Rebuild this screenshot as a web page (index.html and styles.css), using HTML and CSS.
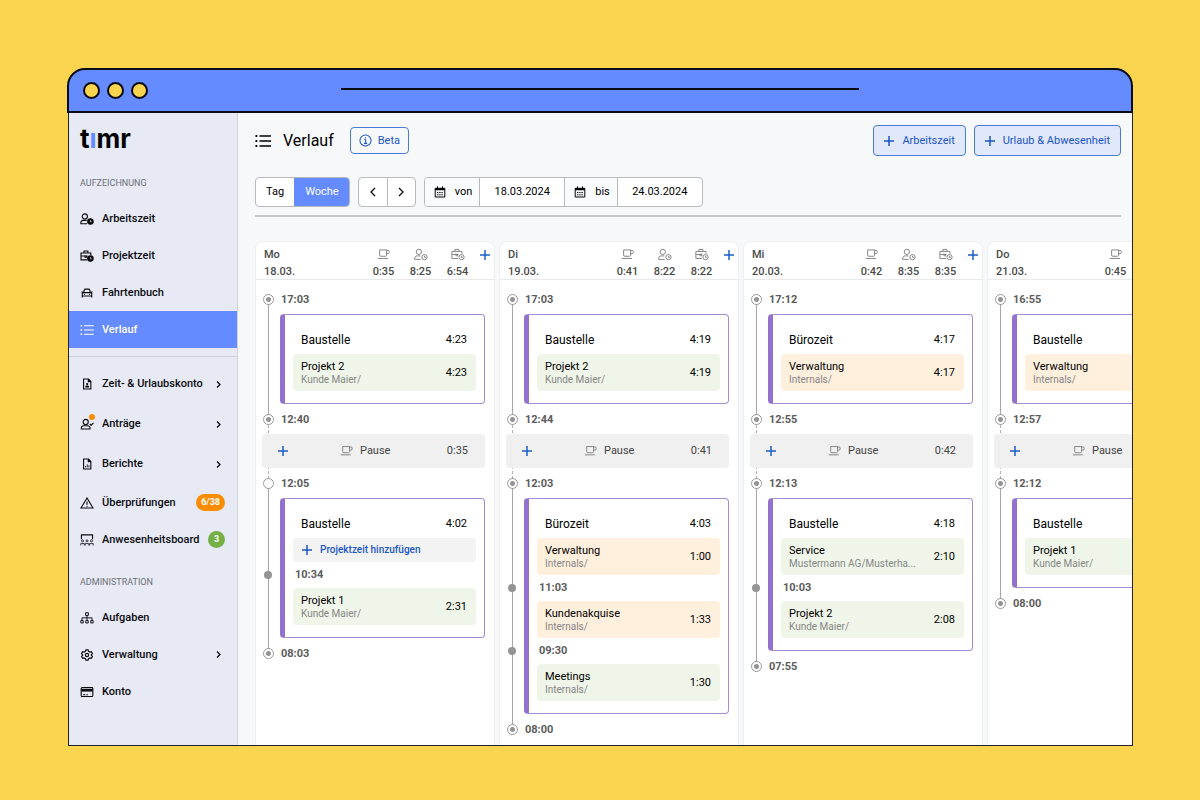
FILE: index.html
```html
<!DOCTYPE html>
<html lang="de">
<head>
    <meta charset="UTF-8">
    <meta name="viewport" content="width=device-width, initial-scale=1.0">
    <title>timr - Verlauf</title>
    <link rel="stylesheet" href="styles.css">
</head>
<body>

    <!-- Icon definitions -->
    <svg class="icon-defs" aria-hidden="true">
        <symbol id="i-list" viewBox="0 0 16 14">
            <path d="M4.5 2H16M4.5 7H16M4.5 12H16"/>
            <path d="M0.5 2H2.3M0.5 7H2.3M0.5 12H2.3" stroke-width="1.8"/>
        </symbol>
        <symbol id="i-user-time" viewBox="0 0 16 14">
            <circle cx="5.5" cy="4" r="3"/>
            <path d="M7.6 12.6H0.8C0.6 9.8 1.8 8.6 3.6 8.6H7.2"/>
            <circle cx="12" cy="10" r="3"/>
            <path d="M12 8.4V10.2H13.6"/>
        </symbol>
        <symbol id="i-user-time-solid" viewBox="0 0 16 14">
            <circle cx="5.5" cy="4" r="3"/>
            <path d="M8 12.6H0.8C0.6 9.8 1.8 8.6 3.6 8.6H7.6"/>
            <circle cx="12" cy="10" r="3.2" fill="currentColor"/>
            <path d="M12 8.4V10.2H13.4" stroke="#e7eaf4" stroke-width="0.9"/>
        </symbol>
        <symbol id="i-case-time" viewBox="0 0 16 14">
            <path d="M8 11.5H1V3.5H12.5V6M4.5 3.5V1.2H9V3.5M1 7H8M5.7 6V8.5H7.8V6"/>
            <circle cx="12" cy="10" r="3"/>
            <path d="M12 8.4V10.2H13.6"/>
        </symbol>
        <symbol id="i-case-time-solid" viewBox="0 0 16 14">
            <path d="M8 11.5H1V3.5H12.5V6M4.5 3.5V1.2H9V3.5M1 7H8M5.7 6V8.5H7.8V6"/>
            <circle cx="12" cy="10" r="3.2" fill="currentColor"/>
            <path d="M12 8.4V10.2H13.4" stroke="#e7eaf4" stroke-width="0.9"/>
        </symbol>
        <symbol id="i-car" viewBox="0 0 16 14">
            <path d="M2.5 12.3V7.5L4 6.6L5 3.2Q5.2 2.5 6 2.5H10Q10.8 2.5 11 3.2L12 6.6L13.5 7.5V12.3M2.5 10.5H13.5M4 6.6H12M1.6 5.6L3.6 6.4M14.4 5.6L12.4 6.4M4.6 8.6H5.6M10.4 8.6H11.4"/>
        </symbol>
        <symbol id="i-file-user" viewBox="0 0 16 14">
            <path d="M4 1.2H9.8L12.5 4V12.8H4ZM9.5 1.4V4.2H12.3"/>
            <path d="M5.8 11C5.8 9 7 8.7 8.2 8.7S10.7 9 10.7 11Z" fill="currentColor" stroke="none"/>
            <circle cx="8.2" cy="7.1" r="1.3" fill="currentColor" stroke="none"/>
        </symbol>
        <symbol id="i-file-chart" viewBox="0 0 16 14">
            <path d="M4 1.2H9.8L12.5 4V12.8H4ZM9.5 1.4V4.2H12.3"/>
            <path d="M6.3 11V9.2M8.3 11V7.5M10.3 11V8.4" stroke-width="1"/>
        </symbol>
        <symbol id="i-user-check" viewBox="0 0 16 14">
            <circle cx="6.5" cy="4.6" r="3"/>
            <path d="M1.4 12.8C1.2 10 2.4 9 4.2 9H8.8C10.6 9 11.8 10 11.6 12.8ZM11.3 7L12.8 8.4L15.6 5.6"/>
        </symbol>
        <symbol id="i-warning" viewBox="0 0 16 14">
            <path d="M8 1.2L15 12.8H1ZM8 5.3V9M8 10.2V11.3"/>
        </symbol>
        <symbol id="i-board" viewBox="0 0 16 14">
            <path d="M1.5 6.2V1H14.5V6.2"/>
            <g stroke-width="0.9">
                <circle cx="2.8" cy="8" r="1.2"/>
                <circle cx="8" cy="8" r="1.2"/>
                <circle cx="13.2" cy="8" r="1.2"/>
                <path d="M0.7 13.4V11.2H4.9V13.4M5.9 13.4V11.2H10.1V13.4M11.1 13.4V11.2H15.3V13.4"/>
            </g>
        </symbol>
        <symbol id="i-sitemap" viewBox="0 0 16 14">
            <g stroke-width="1.1">
                <path d="M6.4 0.8H9.6V4H6.4ZM8 4V9.8M2.2 9.8V6.8H13.8V9.8M0.8 10H3.6V12.8H0.8ZM6.6 10H9.4V12.8H6.6ZM12.4 10H15.2V12.8H12.4Z"/>
            </g>
        </symbol>
        <symbol id="i-gear" viewBox="0 0 16 14">
            <path d="M6.7 1H9.3L9.8 2.7L11.5 3.6L13.1 3.1L14.4 5.3L13.1 6.5V7.5L14.4 8.7L13.1 10.9L11.5 10.4L9.8 11.3L9.3 13H6.7L6.2 11.3L4.5 10.4L2.9 10.9L1.6 8.7L2.9 7.5V6.5L1.6 5.3L2.9 3.1L4.5 3.6L6.2 2.7Z"/>
            <circle cx="8" cy="7" r="1.9"/>
        </symbol>
        <symbol id="i-card" viewBox="0 0 16 14">
            <rect x="1.2" y="1.9" width="13.6" height="10.4" rx="1"/>
            <path d="M1.2 5H14.8" stroke-width="3"/>
            <path d="M3.5 10.2H6M7.2 10.2H9"/>
        </symbol>
        <symbol id="i-cup" viewBox="0 0 16 14">
            <path d="M3 1.8H11V7.8Q11 9 9.8 9H4.2Q3 9 3 7.8ZM11 2.3H12.8Q14 2.3 14 3.5V4.7Q14 5.9 12.8 5.9H11M0.8 11.5H12.5"/>
        </symbol>
        <symbol id="i-plus" viewBox="0 0 12 12">
            <path d="M6 1V11M1 6H11"/>
        </symbol>
        <symbol id="i-info" viewBox="0 0 14 14">
            <circle cx="7" cy="7" r="6"/>
            <path d="M5.6 6.2H7.2V10M5.4 10.1H8.8M7 3.4V4.8"/>
        </symbol>
        <symbol id="i-calendar" viewBox="0 0 12 12">
            <path d="M1.2 2.3H10.8V11H1.2Z"/>
            <path d="M1.2 3.2H10.8" stroke-width="2"/>
            <path d="M3.5 0.4V2.5M8.5 0.4V2.5"/>
            <path d="M3 6.6H9M3 8.8H9" stroke-dasharray="1.4 0.8"/>
        </symbol>
        <symbol id="i-right" viewBox="0 0 8 12">
            <path d="M2 2L6 6L2 10"/>
        </symbol>
        <symbol id="i-left" viewBox="0 0 8 12">
            <path d="M6 2L2 6L6 10"/>
        </symbol>
    </svg>

    <div class="window">
        <div class="titlebar">
            <div class="dots">
                <span class="dot"></span>
                <span class="dot"></span>
                <span class="dot"></span>
            </div>
            <div class="address-line"></div>
        </div>

        <div class="app">
            <!-- Sidebar -->
            <nav class="sidebar">
                <div class="logo">t<span class="logo-i">ı</span>mr</div>

                <div class="nav-title">AUFZEICHNUNG</div>
                <a class="nav-item" href="#"><svg class="icon"><use href="#i-user-time-solid"/></svg>Arbeitszeit</a>
                <a class="nav-item" href="#"><svg class="icon"><use href="#i-case-time-solid"/></svg>Projektzeit</a>
                <a class="nav-item" href="#"><svg class="icon"><use href="#i-car"/></svg>Fahrtenbuch</a>
                <a class="nav-item active" href="#"><svg class="icon"><use href="#i-list"/></svg>Verlauf</a>

                <hr class="nav-divider">

                <a class="nav-item tall" href="#"><svg class="icon"><use href="#i-file-user"/></svg>Zeit- &amp; Urlaubskonto<svg class="chevron"><use href="#i-right"/></svg></a>
                <a class="nav-item tall" href="#"><span class="icon-wrap"><svg class="icon"><use href="#i-user-check"/></svg><span class="notify"></span></span>Anträge<svg class="chevron"><use href="#i-right"/></svg></a>
                <a class="nav-item tall" href="#"><svg class="icon"><use href="#i-file-chart"/></svg>Berichte<svg class="chevron"><use href="#i-right"/></svg></a>
                <a class="nav-item" href="#"><svg class="icon"><use href="#i-warning"/></svg>Überprüfungen<span class="badge orange">6/38</span></a>
                <a class="nav-item" href="#"><svg class="icon"><use href="#i-board"/></svg>Anwesenheitsboard<span class="badge green">3</span></a>

                <div class="nav-title second">ADMINISTRATION</div>
                <a class="nav-item" href="#"><svg class="icon"><use href="#i-sitemap"/></svg>Aufgaben</a>
                <a class="nav-item" href="#"><svg class="icon"><use href="#i-gear"/></svg>Verwaltung<svg class="chevron"><use href="#i-right"/></svg></a>
                <a class="nav-item" href="#"><svg class="icon"><use href="#i-card"/></svg>Konto</a>
            </nav>

            <!-- Content -->
            <main class="main">
                <header class="page-header">
                    <svg class="title-icon"><use href="#i-list"/></svg>
                    <h1>Verlauf</h1>
                    <button class="btn beta"><svg class="info"><use href="#i-info"/></svg>Beta</button>
                    <div class="actions">
                        <button class="btn primary"><svg class="plus"><use href="#i-plus"/></svg>Arbeitszeit</button>
                        <button class="btn primary"><svg class="plus"><use href="#i-plus"/></svg>Urlaub &amp; Abwesenheit</button>
                    </div>
                </header>

                <div class="toolbar">
                    <div class="group">
                        <button class="tab">Tag</button>
                        <button class="tab selected">Woche</button>
                    </div>
                    <div class="group">
                        <button class="arrow" aria-label="Zurück"><svg class="chev"><use href="#i-left"/></svg></button>
                        <button class="arrow" aria-label="Weiter"><svg class="chev"><use href="#i-right"/></svg></button>
                    </div>
                    <div class="group">
                        <label for="from"><svg class="calendar"><use href="#i-calendar"/></svg>von</label>
                        <input id="from" type="text" value="18.03.2024">
                        <label for="to"><svg class="calendar"><use href="#i-calendar"/></svg>bis</label>
                        <input id="to" type="text" value="24.03.2024">
                    </div>
                </div>

                <div class="week">
                    <!-- Montag -->
                    <section class="day">
                        <div class="day-header">
                            <div class="date">Mo<br>18.03.</div>
                            <div class="metric"><svg class="icon"><use href="#i-cup"/></svg>0:35</div>
                            <div class="metric"><svg class="icon"><use href="#i-user-time"/></svg>8:25</div>
                            <div class="metric"><svg class="icon"><use href="#i-case-time"/></svg>6:54</div>
                            <button class="add" aria-label="Hinzufügen"><svg class="plus"><use href="#i-plus"/></svg></button>
                        </div>
                        <div class="timeline">
                            <div class="shift">
                                <div class="stop"><span class="marker"></span>17:03</div>
                                <div class="card">
                                    <div class="card-title">Baustelle<span>4:23</span></div>
                                    <div class="project green"><div>Projekt 2<small>Kunde Maier/</small></div><span>4:23</span></div>
                                </div>
                                <div class="stop"><span class="marker"></span>12:40</div>
                            </div>
                            <div class="gap">
                                <div class="pause"><button class="add" aria-label="Hinzufügen"><svg class="plus"><use href="#i-plus"/></svg></button><div class="pause-label"><svg class="icon"><use href="#i-cup"/></svg>Pause</div>0:35</div>
                            </div>
                            <div class="shift">
                                <div class="stop"><span class="marker open"></span>12:05</div>
                                <div class="card">
                                    <div class="card-title">Baustelle<span>4:02</span></div>
                                    <button class="add-project"><svg class="plus"><use href="#i-plus"/></svg>Projektzeit hinzufügen</button>
                                    <div class="switch">10:34</div>
                                    <div class="project green"><div>Projekt 1<small>Kunde Maier/</small></div><span>2:31</span></div>
                                </div>
                                <div class="stop"><span class="marker"></span>08:03</div>
                            </div>
                        </div>
                    </section>

                    <!-- Dienstag -->
                    <section class="day">
                        <div class="day-header">
                            <div class="date">Di<br>19.03.</div>
                            <div class="metric"><svg class="icon"><use href="#i-cup"/></svg>0:41</div>
                            <div class="metric"><svg class="icon"><use href="#i-user-time"/></svg>8:22</div>
                            <div class="metric"><svg class="icon"><use href="#i-case-time"/></svg>8:22</div>
                            <button class="add" aria-label="Hinzufügen"><svg class="plus"><use href="#i-plus"/></svg></button>
                        </div>
                        <div class="timeline">
                            <div class="shift">
                                <div class="stop"><span class="marker"></span>17:03</div>
                                <div class="card">
                                    <div class="card-title">Baustelle<span>4:19</span></div>
                                    <div class="project green"><div>Projekt 2<small>Kunde Maier/</small></div><span>4:19</span></div>
                                </div>
                                <div class="stop"><span class="marker"></span>12:44</div>
                            </div>
                            <div class="gap">
                                <div class="pause"><button class="add" aria-label="Hinzufügen"><svg class="plus"><use href="#i-plus"/></svg></button><div class="pause-label"><svg class="icon"><use href="#i-cup"/></svg>Pause</div>0:41</div>
                            </div>
                            <div class="shift">
                                <div class="stop"><span class="marker"></span>12:03</div>
                                <div class="card">
                                    <div class="card-title">Bürozeit<span>4:03</span></div>
                                    <div class="project orange"><div>Verwaltung<small>Internals/</small></div><span>1:00</span></div>
                                    <div class="switch">11:03</div>
                                    <div class="project orange"><div>Kundenakquise<small>Internals/</small></div><span>1:33</span></div>
                                    <div class="switch">09:30</div>
                                    <div class="project green"><div>Meetings<small>Internals/</small></div><span>1:30</span></div>
                                </div>
                                <div class="stop"><span class="marker"></span>08:00</div>
                            </div>
                        </div>
                    </section>

                    <!-- Mittwoch -->
                    <section class="day">
                        <div class="day-header">
                            <div class="date">Mi<br>20.03.</div>
                            <div class="metric"><svg class="icon"><use href="#i-cup"/></svg>0:42</div>
                            <div class="metric"><svg class="icon"><use href="#i-user-time"/></svg>8:35</div>
                            <div class="metric"><svg class="icon"><use href="#i-case-time"/></svg>8:35</div>
                            <button class="add" aria-label="Hinzufügen"><svg class="plus"><use href="#i-plus"/></svg></button>
                        </div>
                        <div class="timeline">
                            <div class="shift">
                                <div class="stop"><span class="marker"></span>17:12</div>
                                <div class="card">
                                    <div class="card-title">Bürozeit<span>4:17</span></div>
                                    <div class="project orange"><div>Verwaltung<small>Internals/</small></div><span>4:17</span></div>
                                </div>
                                <div class="stop"><span class="marker"></span>12:55</div>
                            </div>
                            <div class="gap">
                                <div class="pause"><button class="add" aria-label="Hinzufügen"><svg class="plus"><use href="#i-plus"/></svg></button><div class="pause-label"><svg class="icon"><use href="#i-cup"/></svg>Pause</div>0:42</div>
                            </div>
                            <div class="shift">
                                <div class="stop"><span class="marker"></span>12:13</div>
                                <div class="card">
                                    <div class="card-title">Baustelle<span>4:18</span></div>
                                    <div class="project green"><div>Service<small>Mustermann AG/Musterha...</small></div><span>2:10</span></div>
                                    <div class="switch">10:03</div>
                                    <div class="project green"><div>Projekt 2<small>Kunde Maier/</small></div><span>2:08</span></div>
                                </div>
                                <div class="stop"><span class="marker"></span>07:55</div>
                            </div>
                        </div>
                    </section>

                    <!-- Donnerstag -->
                    <section class="day">
                        <div class="day-header">
                            <div class="date">Do<br>21.03.</div>
                            <div class="metric"><svg class="icon"><use href="#i-cup"/></svg>0:45</div>
                            <div class="metric"></div>
                            <div class="metric"></div>
                            <div class="add"></div>
                        </div>
                        <div class="timeline">
                            <div class="shift">
                                <div class="stop"><span class="marker"></span>16:55</div>
                                <div class="card">
                                    <div class="card-title">Baustelle</div>
                                    <div class="project orange"><div>Verwaltung<small>Internals/</small></div></div>
                                </div>
                                <div class="stop"><span class="marker"></span>12:57</div>
                            </div>
                            <div class="gap">
                                <div class="pause"><button class="add" aria-label="Hinzufügen"><svg class="plus"><use href="#i-plus"/></svg></button><div class="pause-label"><svg class="icon"><use href="#i-cup"/></svg>Pause</div></div>
                            </div>
                            <div class="shift">
                                <div class="stop"><span class="marker"></span>12:12</div>
                                <div class="card">
                                    <div class="card-title">Baustelle</div>
                                    <div class="project green"><div>Projekt 1<small>Kunde Maier/</small></div></div>
                                </div>
                                <div class="stop"><span class="marker"></span>08:00</div>
                            </div>
                        </div>
                    </section>
                </div>
            </main>
        </div>
    </div>

</body>
</html>
```

FILE: styles.css
```css
* {
    padding: 0;
    margin: 0;
    box-sizing: border-box;
}

body {
    height: 100vh;
    display: flex;
    padding: 68px 67px 54px;
    background-color: #fbd54f;
    font-family: Roboto, sans-serif;
    font-size: 11px;
    font-weight: 400;
    line-height: 14px;
    color: #000;
}

button, input {
    font: inherit;
    color: inherit;
    background: none;
    border: none;
}

button {
    cursor: pointer;
}

svg {
    fill: none;
    stroke: currentColor;
    flex-shrink: 0;
}

.icon-defs {
    position: absolute;
    width: 0;
    height: 0;
}

.icon {
    width: 14px;
    height: 12px;
    stroke-width: 1.3;
}

.plus {
    width: 12px;
    height: 12px;
    stroke-width: 1.5;
}

/* Browser window */
.window {
    flex: 1;
    min-width: 0;
    display: flex;
    flex-direction: column;
}

.titlebar {
    height: 45px;
    flex-shrink: 0;
    display: grid;
    grid-template-columns: 1fr 1.9fr 1fr;
    align-items: center;
    background-color: #648bff;
    border: 2px solid #0b0b14;
    border-radius: 18px 18px 0 0;
}

.dots {
    display: flex;
    gap: 7px;
    padding-left: 14px;
}

.dot {
    width: 17px;
    height: 17px;
    border: 2px solid #0b0b14;
    border-radius: 50%;
    background-color: #fbd54f;
}

.address-line {
    height: 2px;
    margin-bottom: 4px;
    background-color: #0b0b14;
}

.app {
    flex: 1;
    min-height: 0;
    display: flex;
    margin-left: 1px;
    border: 1px solid #22222a;
    border-top: none;
    background-color: #f7f8fa;
    overflow: hidden;
}

/* Sidebar */
.sidebar {
    width: 169px;
    flex-shrink: 0;
    background-color: #e7eaf4;
    border-right: 1px solid #d0d2da;
    font-weight: 500;
}

.logo {
    height: 57px;
    padding: 11px 0 0 11px;
    font-family: Inter, sans-serif;
    font-size: 26px;
    font-weight: 700;
    line-height: 30px;
}

.logo-i {
    color: #648bff;
}

.nav-title {
    height: 30px;
    padding: 6px 11px 0;
    font-size: 9px;
    font-weight: 400;
    color: #6d6f76;
}

.nav-title.second {
    height: 41px;
    padding-top: 17px;
}

.nav-item {
    height: 37px;
    display: flex;
    align-items: center;
    padding: 0 12px 0 11px;
    color: #0b0b10;
    text-decoration: none;
    white-space: nowrap;
}

.nav-item.tall {
    height: 40px;
}

.nav-item .icon {
    margin-right: 8px;
}

.nav-item.active {
    background-color: #648bff;
    color: white;
}

.nav-divider {
    margin: 8px 0 7px;
    border: none;
    border-top: 1px solid #cdd0d9;
}

.chevron {
    width: 7px;
    height: 9px;
    margin-left: auto;
    margin-right: 3px;
    stroke-width: 1.7;
}

.icon-wrap {
    position: relative;
    display: flex;
}

.notify {
    position: absolute;
    top: -4px;
    right: 7px;
    width: 6px;
    height: 6px;
    border-radius: 50%;
    background-color: #fb8c00;
}

.badge {
    height: 17px;
    min-width: 17px;
    margin-left: auto;
    padding: 0 5px;
    border-radius: 9px;
    font-size: 9px;
    font-weight: 700;
    line-height: 17px;
    text-align: center;
    color: white;
}

.badge.orange {
    background-color: #fb8c00;
}

.badge.green {
    background-color: #74b043;
}

/* Main content */
.main {
    flex: 1;
    min-width: 0;
    display: flex;
    flex-direction: column;
    padding: 12px 0 0 17px;
}

.page-header {
    display: flex;
    align-items: center;
    margin-right: 11px;
    margin-bottom: 21px;
}

.title-icon {
    width: 16px;
    height: 14px;
    margin-right: 12px;
    stroke-width: 1.3;
}

h1 {
    margin-right: 16px;
    font-size: 16px;
    font-weight: 400;
    line-height: 20px;
}

.btn {
    display: flex;
    align-items: center;
    border: 1px solid #4a7bd9;
    border-radius: 4px;
    color: #1a56c4;
    white-space: nowrap;
}

.beta {
    height: 27px;
    padding: 0 8px;
    gap: 6px;
}

.info {
    width: 13px;
    height: 13px;
    stroke-width: 1.1;
}

.actions {
    display: flex;
    gap: 8px;
    margin-left: auto;
}

.primary {
    height: 31px;
    padding: 0 10px 0 9px;
    gap: 7px;
    background-color: #e1e8fc;
}

.toolbar {
    display: flex;
    gap: 8px;
    margin-right: 11px;
    padding-bottom: 8px;
    border-bottom: 2px solid #c6c8cb;
}

.group {
    height: 30px;
    display: flex;
    border: 1px solid #b8babd;
    border-radius: 4px;
    background-color: white;
    overflow: hidden;
}

.group > * + * {
    border-left: 1px solid #b8babd;
}

.tab {
    padding: 0 10px;
}

.group .selected {
    border-color: #648bff;
    background-color: #648bff;
    color: white;
}

.arrow {
    width: 28px;
    display: flex;
    align-items: center;
    justify-content: center;
}

.chev {
    width: 8px;
    height: 12px;
    stroke-width: 1.2;
}

.group label {
    display: flex;
    align-items: center;
    gap: 9px;
    padding: 0 7px 0 9px;
    background-color: #fafbfc;
}

.calendar {
    width: 12px;
    height: 12px;
}

.group input {
    width: 85px;
    text-align: center;
}

/* Week columns */
.week {
    flex: 1;
    min-height: 0;
    display: flex;
    gap: 4px;
    margin-top: 24px;
    overflow: hidden;
}

.day {
    width: 240px;
    flex-shrink: 0;
    background-color: white;
    border: 1px solid #eeeff1;
    border-bottom: none;
    border-radius: 8px 8px 0 0;
}

.day-header {
    height: 38px;
    display: flex;
    padding: 4px 0 0 8px;
    border-bottom: 1px solid #e8e9eb;
    font-weight: 500;
    line-height: 17px;
    color: #4a4a4a;
}

.date {
    margin-right: auto;
}

.metric {
    width: 37px;
    display: flex;
    flex-direction: column;
    align-items: center;
}

.metric .icon {
    height: 17px;
    stroke-width: 1;
    color: #777;
}

.add {
    width: 18px;
    height: 17px;
    display: flex;
    align-items: center;
    justify-content: center;
    color: #1a5fc8;
}

.timeline {
    padding: 4px 9px 0 6px;
}

.shift, .gap {
    position: relative;
}

/* solid line between the first and last stop of a shift */
.shift::before {
    content: "";
    position: absolute;
    top: 16px;
    bottom: 14px;
    left: 6px;
    border-left: 1px solid #a5a5a5;
}

/* dotted line behind the break */
.gap::before {
    content: "";
    position: absolute;
    top: -9px;
    bottom: -11px;
    left: 6px;
    border-left: 1px dashed #b0b0b0;
}

.stop {
    height: 30px;
    display: flex;
    align-items: center;
    gap: 7px;
    padding-top: 1px;
    font-weight: 700;
    color: #5c5c5c;
}

.marker {
    position: relative;
    width: 11px;
    height: 11px;
    margin-left: 1px;
    border: 1px solid #999;
    border-radius: 50%;
    background: radial-gradient(circle, #949494 2px, white 3px);
}

.marker.open {
    background: white;
}

.card {
    margin-left: 18px;
    padding: 0 8px 12px;
    border: 1px solid #a58ad4;
    border-left: 5px solid #9372cf;
    border-radius: 4px;
    background-color: white;
}

.card-title {
    height: 39px;
    display: flex;
    justify-content: space-between;
    padding: 18px 9px 0 8px;
    font-size: 12px;
}

.card-title span {
    font-size: 11px;
}

.project {
    height: 37px;
    display: flex;
    align-items: center;
    justify-content: space-between;
    padding: 0 9px 0 8px;
    border-radius: 4px;
    line-height: 13px;
}

.project.green {
    background-color: #eff6e9;
}

.project.orange {
    background-color: #fff0de;
}

.project small {
    display: block;
    font-size: 10px;
    color: #858585;
}

.switch {
    position: relative;
    height: 26px;
    padding-left: 2px;
    font-weight: 700;
    line-height: 26px;
    color: #5c5c5c;
}

.switch::before {
    content: "";
    position: absolute;
    top: 9px;
    left: -29px;
    width: 8px;
    height: 8px;
    border-radius: 50%;
    background-color: #949494;
}

.add-project {
    width: 100%;
    height: 24px;
    display: flex;
    align-items: center;
    gap: 7px;
    padding: 0 8px;
    border-radius: 4px;
    background-color: #f3f3f4;
    font-size: 10px;
    font-weight: 500;
    color: #1a56c4;
}

.pause {
    position: relative;
    height: 34px;
    display: flex;
    align-items: center;
    padding: 0 17px 0 12px;
    border-radius: 4px;
    background-color: #f0f0f0;
    color: #444;
}

.pause-label {
    display: flex;
    align-items: center;
    gap: 6px;
    margin-left: 48px;
    margin-right: auto;
}

.pause .icon {
    stroke-width: 1;
    color: #777;
}
```
